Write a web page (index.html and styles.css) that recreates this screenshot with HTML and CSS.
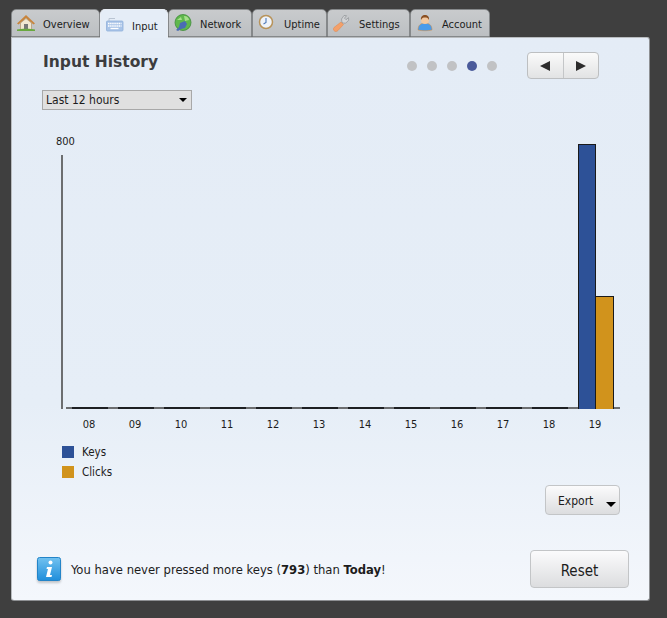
FILE: index.html
```html
<!DOCTYPE html>
<html lang="en">

<head>
    <meta charset="UTF-8">
    <title>Input History</title>
    <link rel="stylesheet" href="styles.css">
</head>

<body>
    <nav class="tabs">
        <div class="tab">
            <svg class="tab-icon" viewBox="0 0 18 18"><path d="M0 9.500 9 1l9 8.500-1.500 1L9 4l-7.500 6.500z" fill="#c8843c"/><path d="M3.500 9 9 4.500 14.500 9v6.500h-11z" fill="#f1e7d2" stroke="#a88a5c" stroke-width=".6"/><rect x="7" y="10" width="4" height="5.500" fill="#777"/><path d="M0 15.500c3-1 15-1 18 0v1.500H0z" fill="#69a83f"/></svg>
            <span>Overview</span>
        </div>
        <div class="tab active">
            <svg class="tab-icon" viewBox="0 0 18 18"><path d="M3 6V3.500h6" fill="none" stroke="#b9c4d2" stroke-width="1"/><rect x=".5" y="6" width="16.500" height="10" rx="1" fill="#a9c4e8" stroke="#8fb0da" stroke-width=".8"/><path d="M2 8.500h13.500M2 11h13.500" stroke="#fff" stroke-width="1.300" stroke-dasharray="1.500 .6"/><path d="M4.500 13.500h8" stroke="#fff" stroke-width="1.300"/></svg>
            <span>Input</span>
        </div>
        <div class="tab">
            <svg class="tab-icon" viewBox="0 0 18 18"><circle cx="9" cy="8.500" r="8" fill="#5fb84c" stroke="#3f8a3a" stroke-width=".8"/><path d="M10 2c3 0 5 2 5 4l-4 1zM3 6l4-3 1 3z" fill="#a6df8c"/><path d="M2 16l3-3 1-4 5-2 2 3-2 4-4 1-3 2z" fill="#4a6cb4"/></svg>
            <span>Network</span>
        </div>
        <div class="tab">
            <svg class="tab-icon" viewBox="0 0 18 18"><circle cx="8" cy="8" r="6.500" fill="#eef3fa" stroke="#b8935a" stroke-width="1.500"/><path d="M8 4v4.500L5.500 10" fill="none" stroke="#4e78b8" stroke-width="1.100"/></svg>
            <span>Uptime</span>
        </div>
        <div class="tab">
            <svg class="tab-icon" viewBox="0 0 18 18"><path d="M1.500 17c-1.500-1-1.500-2.500-.5-3.500L8 8l2.500 2.500-5.500 6c-1 1-2.500 1.500-3.500.5z" fill="#f3a06a" stroke="#e08448" stroke-width=".5"/><path d="M9 8.500 8.500 5 11 1.500l2.500.2-2 2.500 1.500 1.500 2.500-2 .2 2.500-3 3-2.500-.2z" fill="#d2d4d6" stroke="#85888c" stroke-width=".6"/></svg>
            <span>Settings</span>
        </div>
        <div class="tab">
            <svg class="tab-icon" viewBox="0 0 18 18"><path d="M2 16c0-5 3-7 7-7s7 2 7 7c-4 1-10 1-14 0z" fill="#4a9bea" stroke="#e08a30" stroke-width=".5"/><circle cx="9" cy="6" r="4" fill="#f2c8a0"/><path d="M5 6c-.5-3.500 1.500-5 4-5s4.500 1.500 4 5c-1-2-2-2.500-4-2.500S6 4 5 6z" fill="#8a4f22"/></svg>
            <span>Account</span>
        </div>
    </nav>

    <main class="panel">
        <header class="panel-head">
            <h1>Input History</h1>
            <div class="pager">
                <i class="dot"></i><i class="dot"></i><i class="dot"></i><i class="dot current"></i><i class="dot"></i>
            </div>
            <div class="nav-btns">
                <button class="nav-btn"><span class="arrow-left"></span></button>
                <button class="nav-btn"><span class="arrow-right"></span></button>
            </div>
        </header>

        <div class="range-select">
            <span>Last 12 hours</span>
            <span class="caret"></span>
        </div>

        <section class="chart">
            <div class="chart-max">800</div>
            <div class="plot">
                <div class="col"></div>
                <div class="col"></div>
                <div class="col"></div>
                <div class="col"></div>
                <div class="col"></div>
                <div class="col"></div>
                <div class="col"></div>
                <div class="col"></div>
                <div class="col"></div>
                <div class="col"></div>
                <div class="col"></div>
                <div class="col col-last">
                    <div class="bar bar-keys" style="height: 265px"></div>
                    <div class="bar bar-clicks" style="height: 113px"></div>
                </div>
            </div>
            <div class="hours">
                <span>08</span><span>09</span><span>10</span><span>11</span><span>12</span><span>13</span>
                <span>14</span><span>15</span><span>16</span><span>17</span><span>18</span><span>19</span>
            </div>
        </section>

        <ul class="legend">
            <li><i class="swatch swatch-keys"></i>Keys</li>
            <li><i class="swatch swatch-clicks"></i>Clicks</li>
        </ul>

        <div class="export-row">
            <button class="btn btn-export">Export<span class="caret"></span></button>
        </div>

        <footer class="panel-foot">
            <svg class="info-icon" viewBox="0 0 24 24">
                <defs>
                    <linearGradient id="infoFill" x1="0" y1="0" x2="0" y2="1">
                        <stop offset="0" stop-color="#72c2f0"/>
                        <stop offset="1" stop-color="#1f8edb"/>
                    </linearGradient>
                </defs>
                <rect x=".5" y=".5" width="23" height="23" rx="2" fill="url(#infoFill)" stroke="#2384c8"/>
                <circle cx="13.500" cy="5.500" r="2" fill="#fff"/>
                <path d="M10 10h5l-2 8h2l-.5 2H9l2-8H9.500z" fill="#fff"/>
            </svg>
            <p>You have never pressed more keys (<b>793</b>) than <b>Today</b>!</p>
            <button class="btn btn-reset">Reset</button>
        </footer>
    </main>
</body>

</html>
```

FILE: styles.css
```css
html,
body {
    background-color: #3f3f3f;
    height: 100%;
}

* {
    margin: 0;
    padding: 0;
    box-sizing: border-box;
}

body {
    font-family: "DejaVu Sans", sans-serif;
    font-stretch: condensed;
    font-size: 12px;
    color: #1c1c1c;
    padding: 9px 0 0 11px;
    overflow: hidden;
}

/* tabs */
.tabs {
    display: flex;
    height: 28px;
    position: relative;
    z-index: 1;
    font-size: 11px;
}

.tab {
    display: flex;
    align-items: center;
    width: 82px;
    height: 28px;
    padding-left: 5px;
    background: linear-gradient(#c9cbcd, #bcbfc2);
    border: 1px solid #85888a;
    border-radius: 5px 5px 0 0;
}

.tab:nth-child(1) {
    width: 89px;
}

.tab:nth-child(2) {
    width: 68px;
}

.tab:nth-child(3) {
    width: 84px;
}

.tab:nth-child(4) {
    width: 75px;
}

.tab:nth-child(5) {
    width: 83px;
}

.tab:nth-child(6) {
    width: 80px;
}

.tab span {
    margin-left: 8px;
    padding-top: 3px;
}

.tab-icon {
    width: 18px;
    height: 18px;
    flex: none;
}

.tab.active {
    background: #e5edf7;
    border-color: #e9eef5;
    border-bottom: 0;
    height: 29px;
}

.tab.active span {
    padding-top: 4px;
}

/* panel */
.panel {
    width: 639px;
    height: 564px;
    background: linear-gradient(#e4ecf6 0, #e6eef7 65%, #f4f7fc 100%);
    border: 1px solid #b9bcbf;
    border-right-color: #8e9093;
    border-bottom-color: #8e9093;
    border-radius: 0 3px 3px 3px;
}

.panel-head {
    display: flex;
    align-items: flex-start;
    height: 38px;
    padding-top: 14px;
}

h1 {
    font-size: 15.5px;
    font-weight: bold;
    font-stretch: normal;
    line-height: 20px;
    color: #3c3c3e;
    margin-left: 31px;
    width: 364px;
}

.pager {
    display: flex;
    gap: 10px;
    margin-top: 9px;
    width: 120px;
}

.dot {
    width: 10px;
    height: 10px;
    border-radius: 50%;
    background: #c1c2c4;
}

.dot.current {
    background: #4a5a9a;
}

.nav-btns {
    display: flex;
    width: 72px;
    height: 27px;
    border: 1px solid #bdbfc1;
    border-radius: 4px;
    background: linear-gradient(#fafafa, #e2e3e4);
}

.nav-btn {
    flex: 1;
    display: flex;
    align-items: center;
    justify-content: center;
    border: 0;
    background: none;
}

.nav-btn+.nav-btn {
    border-left: 1px solid #c4c6c8;
}

.arrow-left,
.arrow-right {
    width: 0;
    height: 0;
    border-top: 5px solid transparent;
    border-bottom: 5px solid transparent;
}

.arrow-left {
    border-right: 10px solid #2c2c2c;
}

.arrow-right {
    border-left: 10px solid #2c2c2c;
}

.range-select {
    display: flex;
    align-items: center;
    justify-content: space-between;
    width: 150px;
    height: 20px;
    margin: 14px 0 0 30px;
    padding: 0 4px 0 3px;
    background: #e0e0e0;
    border: 1px solid #a8a8a8;
}

.caret {
    width: 0;
    height: 0;
    border-left: 4px solid transparent;
    border-right: 4px solid transparent;
    border-top: 4px solid #000;
}

/* chart */
.chart {
    margin: 24px 0 0 44px;
    font-size: 11px;
}

.chart-max {
    height: 15px;
    line-height: 15px;
}

.plot {
    display: grid;
    grid-template-columns: repeat(12, 46px);
    align-items: end;
    width: 559px;
    height: 262px;
    margin: -2px 0 0 5px;
    padding-left: 3px;
    border-left: 2px solid #6c6e70;
    border-image: linear-gradient(transparent 9px, #6c6e70 9px) 1;
}

.col {
    display: flex;
    justify-content: center;
    align-items: flex-end;
    height: 2px;
    background: linear-gradient(90deg, #6c6e70 6px, #1d1f22 6px, #1d1f22 42px, #6c6e70 42px);
}

.col-last {
    margin-right: -2px;
    background: #6c6e70;
}

.bar {
    width: 18px;
    flex: none;
    border: 1px solid #1a1a1a;
    border-bottom: 0;
}

.bar-keys {
    background: #2d5197;
}

.bar-clicks {
    background: #d1931c;
    border-left: 0;
}

.hours {
    display: grid;
    grid-template-columns: repeat(12, 46px);
    margin: 8px 0 0 10px;
    text-align: center;
    height: 15px;
    line-height: 15px;
}

.legend {
    list-style: none;
    margin: 10px 0 0 50px;
    font-size: 11.5px;
}

.legend li {
    display: flex;
    align-items: center;
    height: 20px;
}

.swatch {
    width: 12px;
    height: 12px;
    margin-right: 8px;
}

.swatch-keys {
    background: #2d5197;
}

.swatch-clicks {
    background: #d1931c;
}

/* buttons */
.btn {
    font-family: inherit;
    font-stretch: inherit;
    color: #1c1c1c;
    border: 1px solid #c3c5c7;
    border-radius: 4px;
    background: linear-gradient(#fbfbfc, #dcdddf);
}

.export-row {
    display: flex;
    justify-content: flex-end;
    padding-right: 29px;
    margin-top: 3px;
}

.btn-export {
    display: flex;
    align-items: center;
    font-size: 12px;
    width: 75px;
    height: 30px;
    padding: 2px 0 0 12px;
}

.btn-export .caret {
    margin: 7px 0 0 13px;
    border-left-width: 5px;
    border-right-width: 5px;
    border-top-width: 5px;
}

.panel-foot {
    display: flex;
    align-items: center;
    margin-top: 35px;
    padding: 0 20px 0 25px;
    font-size: 12.9px;
}

.info-icon {
    width: 24px;
    height: 24px;
    flex: none;
    margin-right: 10px;
    filter: drop-shadow(0 2px 1px rgba(0, 0, 0, .2));
}

.panel-foot p {
    flex: 1;
}

.btn-reset {
    width: 99px;
    height: 38px;
    padding-top: 3px;
    font-size: 15px;
}
```
